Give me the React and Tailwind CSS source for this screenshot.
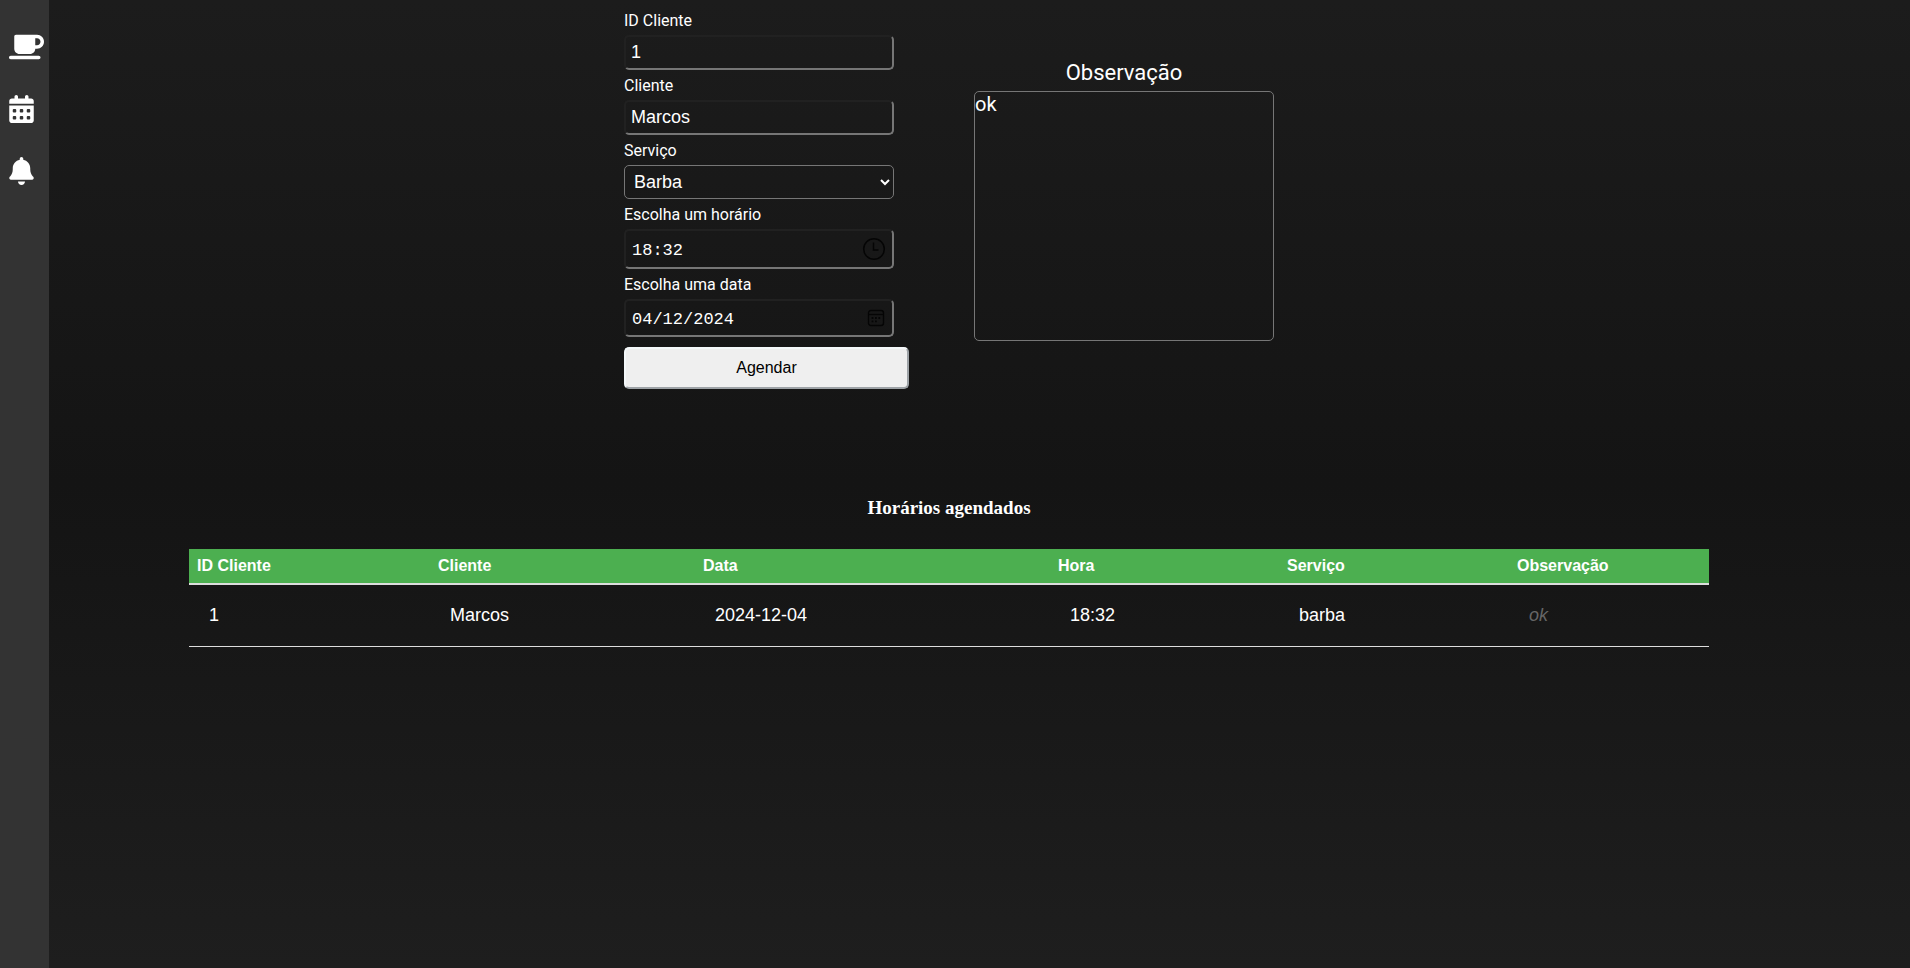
import { FaMugSaucer, FaCalendarDays, FaBell } from "react-icons/fa6";

const labelClass = "flex h-[30px] items-center pt-[2px] font-[Roboto,sans-serif] text-[16px] leading-[20px] text-white";
const fieldClass =
  "w-[270px] rounded-[5px] border-2 border-t-[#212121] border-l-[#212121] border-r-[#767676] border-b-[#767676] bg-transparent text-white outline-none";
const sansField = " h-[35px] px-[5px] font-['Liberation_Sans',Arial,sans-serif] text-[18px]";
const monoField = " px-[6px] pt-[2px] font-['Liberation_Mono',monospace] text-[17px]";

const appointments = [
  { id: "1", client: "Marcos", date: "2024-12-04", time: "18:32", service: "barba", note: "ok" },
];

function ClockIcon() {
  return (
    <svg width="24" height="24" viewBox="0 0 24 24" fill="none" stroke="#050505" strokeWidth="1.5">
      <circle cx="12" cy="12" r="10.3" />
      <path d="M11.5 5.5v7.5h5" />
    </svg>
  );
}

function DateIcon() {
  return (
    <svg width="18" height="18" viewBox="0 0 18 18" fill="none" stroke="#050505" strokeWidth="1.4">
      <rect x="1.5" y="1.5" width="15" height="15" rx="2.5" />
      <path d="M1.5 5.5h15" />
      <path d="M4.6 9h1.8M8 9h1.8M11.4 9h1.8M4.6 12.3h1.8M8 12.3h1.8" strokeWidth="1.8" />
    </svg>
  );
}

function Sidebar() {
  return (
    <nav className="flex w-[49px] shrink-0 flex-col gap-[34px] bg-[#333333] pt-[33px] pl-[9px] text-[28px] text-white">
      <a href="#servicos" aria-label="Serviços"><FaMugSaucer className="h-[28px] w-[35px]" /></a>
      <a href="#agenda" aria-label="Agenda"><FaCalendarDays className="h-[28px] w-[25px]" /></a>
      <a href="#avisos" aria-label="Avisos"><FaBell className="h-[28px] w-[25px]" /></a>
    </nav>
  );
}

function BookingForm() {
  return (
    <form className="flex justify-center gap-[65px]" onSubmit={(e) => e.preventDefault()}>
      <div className="flex w-[285px] flex-col items-start pt-[5px]">
        <label htmlFor="id" className={labelClass}>ID Cliente</label>
        <input id="id" type="text" defaultValue="1" className={fieldClass + sansField} />
        <label htmlFor="client" className={labelClass}>Cliente</label>
        <input id="client" type="text" defaultValue="Marcos" className={fieldClass + sansField} />
        <label htmlFor="service" className={labelClass}>Serviço</label>
        <select
          id="service"
          defaultValue="barba"
          className="h-[34px] w-[270px] rounded-[5px] border border-[#767676] bg-transparent px-[5px] font-['Liberation_Sans',Arial,sans-serif] text-[18px] text-white"
        >
          <option value="barba">Barba</option>
          <option value="cabelo">Cabelo</option>
        </select>
        <label htmlFor="time" className={labelClass}>Escolha um horário</label>
        <div className="relative flex items-center">
          <input id="time" type="text" defaultValue="18:32" className={fieldClass + monoField + " h-[40px]"} />
          <button type="button" aria-label="Abrir horários" className="absolute right-[8px]"><ClockIcon /></button>
        </div>
        <label htmlFor="date" className={labelClass}>Escolha uma data</label>
        <div className="relative flex items-center">
          <input id="date" type="text" defaultValue="04/12/2024" className={fieldClass + monoField + " h-[38px]"} />
          <button type="button" aria-label="Abrir calendário" className="absolute right-[9px]"><DateIcon /></button>
        </div>
        <button
          type="submit"
          className="mt-[10px] h-[42px] w-full rounded-[5px] border-2 border-t-[#f4f8fa] border-l-[#f4f8fa] border-r-[#9da2a6] border-b-[#9da2a6] bg-[#efefef] font-['Liberation_Sans',Arial,sans-serif] text-[16px] text-black"
        >
          Agendar
        </button>
      </div>
      <div className="flex w-[300px] flex-col items-center pt-[59px]">
        <label htmlFor="note" className="font-[Roboto,sans-serif] text-[22px] leading-[28px] text-white">Observação</label>
        <textarea
          id="note"
          defaultValue="ok"
          className="mt-1 h-[250px] w-full resize-none rounded-[5px] border border-[#767676] bg-transparent font-[Roboto,sans-serif] text-[20px] leading-[24px] text-white outline-none"
        />
      </div>
    </form>
  );
}

function AppointmentsTable() {
  return (
    <section className="mt-[108px] flex flex-col items-center">
      <h2 className="font-['Liberation_Serif',serif] text-[19px] leading-[22px] font-bold text-white">Horários agendados</h2>
      <table className="mt-[30px] w-full max-w-[1520px] table-fixed border-collapse text-left font-['Liberation_Sans',Arial,sans-serif] text-white">
        <colgroup>
          <col className="w-[241px]" />
          <col className="w-[265px]" />
          <col className="w-[355px]" />
          <col className="w-[229px]" />
          <col className="w-[230px]" />
          <col className="w-[200px]" />
        </colgroup>
        <thead>
          <tr className="h-[35px] border-b-2 border-[#dddddd] bg-[#4caf50] text-[16px] leading-[18px]">
            <th className="px-2">ID Cliente</th>
            <th className="px-2">Cliente</th>
            <th className="px-2">Data</th>
            <th className="px-2">Hora</th>
            <th className="px-2">Serviço</th>
            <th className="px-2">Observação</th>
          </tr>
        </thead>
        <tbody>
          {appointments.map((a) => (
            <tr key={a.id} className="h-[62px] border-b border-[#dddddd] text-[18px] leading-[20px]">
              <td className="px-5">{a.id}</td>
              <td className="px-5">{a.client}</td>
              <td className="px-5">{a.date}</td>
              <td className="px-5">{a.time}</td>
              <td className="px-5">{a.service}</td>
              <td className="px-5 text-[#666666] italic">{a.note}</td>
            </tr>
          ))}
        </tbody>
      </table>
    </section>
  );
}

export default function App() {
  return (
    <div className="flex min-h-screen bg-linear-to-b from-[#1c1c1c] via-[#141414] to-[#1e1e1e]">
      <Sidebar />
      <main className="grow pr-[61px]">
        <BookingForm />
        <AppointmentsTable />
      </main>
    </div>
  );
}
